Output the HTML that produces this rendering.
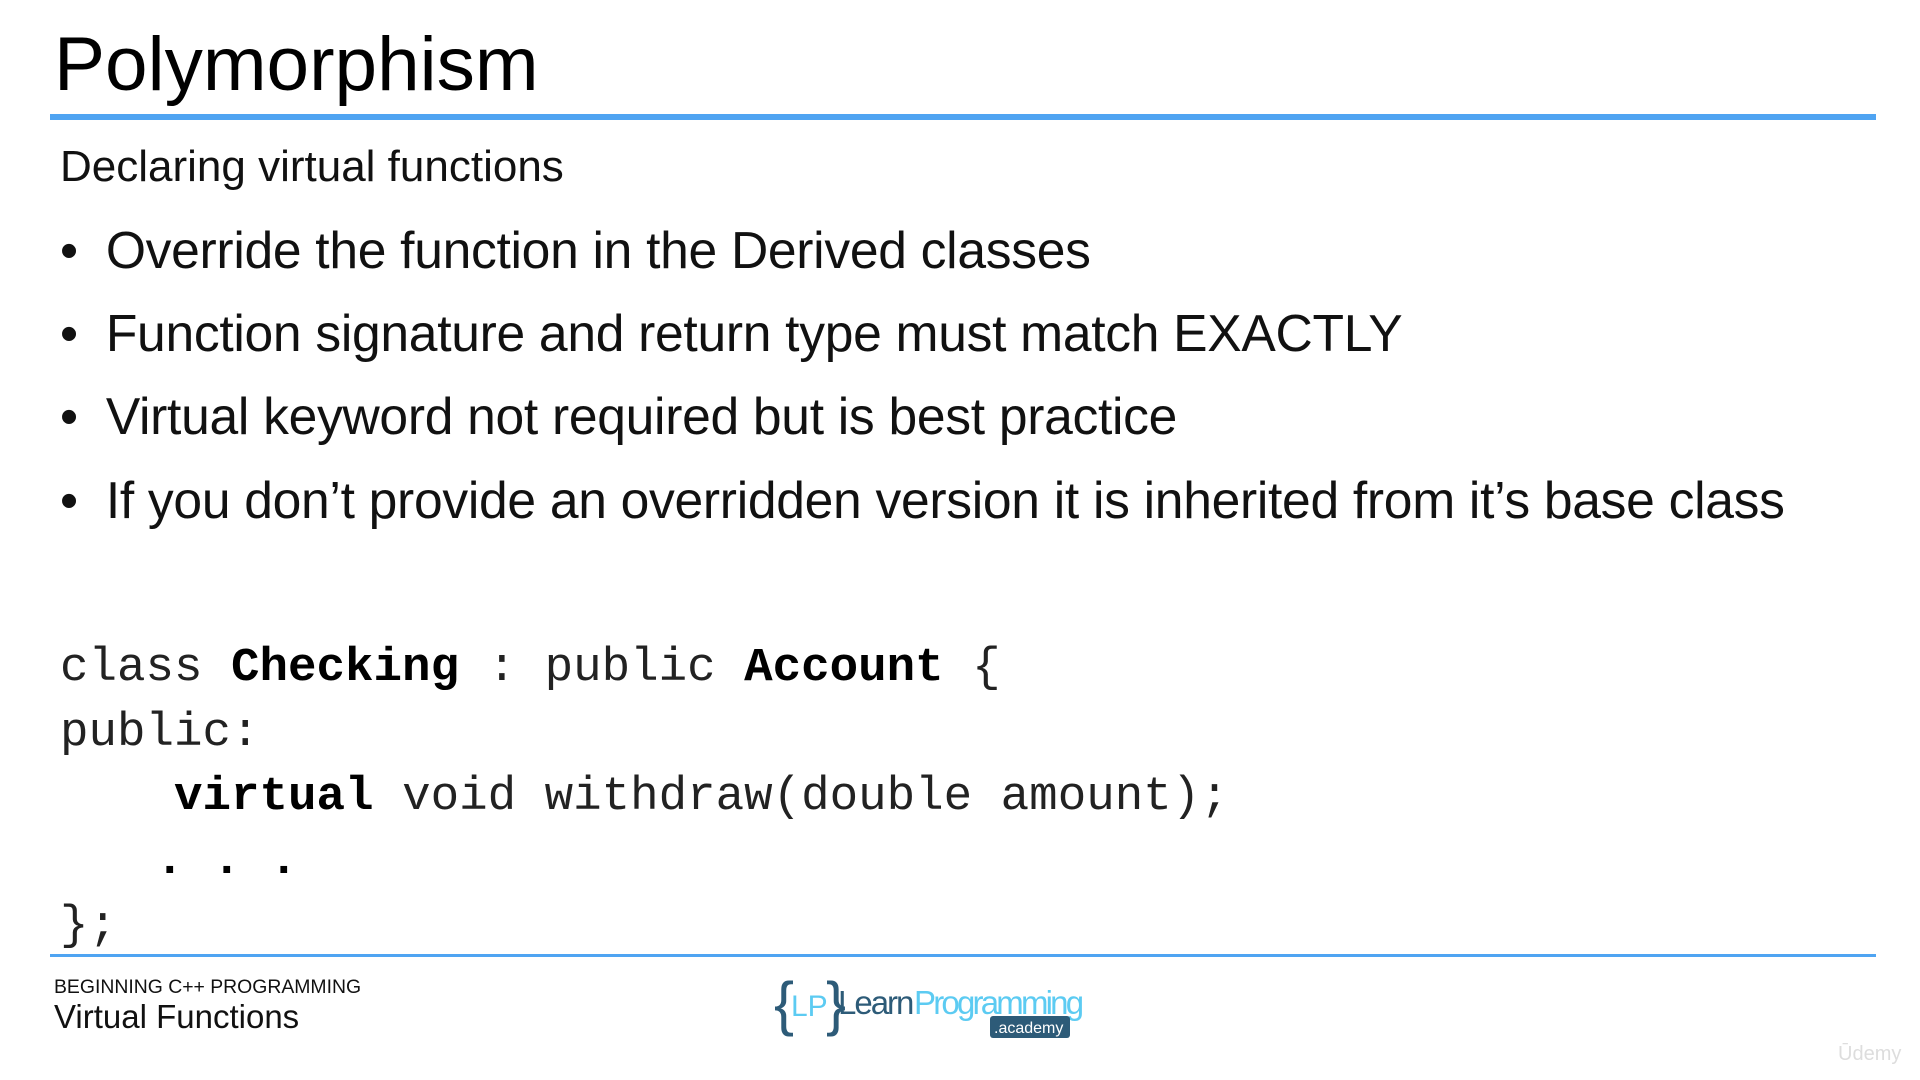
<!DOCTYPE html>
<html><head><meta charset="utf-8"><style>
*{margin:0;padding:0}
body{width:1920px;height:1080px;background:#fff;position:relative;overflow:hidden;font-family:"Liberation Sans",sans-serif;color:#111}
.a{position:absolute;white-space:pre}
.code{font-family:"Liberation Mono",monospace;font-size:47.5px;color:#222}
.b{font-weight:bold;color:#000}
.bl{font-size:51.6px;letter-spacing:-0.3px}
</style></head><body>
<div class="a" style="left:54px;top:20px;font-size:76.5px;line-height:90px;color:#000">Polymorphism</div>
<div class="a" style="left:50px;top:114px;width:1826px;height:6px;background:#4fa4f2"></div>
<div class="a" style="left:60px;top:141px;font-size:44px;line-height:52px">Declaring virtual functions</div>
<div class="a bl" style="left:60px;top:220px;line-height:60px">•  Override the function in the Derived classes</div>
<div class="a bl" style="left:60px;top:303px;line-height:60px">•  Function signature and return type must match EXACTLY</div>
<div class="a bl" style="left:60px;top:386px;line-height:60px">•  Virtual keyword not required but is best practice</div>
<div class="a bl" style="left:60px;top:470px;line-height:60px">•  If you don’t provide an overridden version it is inherited from it’s base class</div>
<div class="a code" style="left:60px;top:640px;line-height:56px">class <span class="b">Checking</span> : public <span class="b">Account</span> {</div>
<div class="a code" style="left:60px;top:705px;line-height:56px">public:</div>
<div class="a code" style="left:60px;top:769px;line-height:56px">    <span class="b">virtual</span> void withdraw(double amount);</div>
<div class="a code" style="left:70px;top:833px;line-height:56px"><span class="b">   . . .</span></div>
<div class="a code" style="left:60px;top:898px;line-height:56px">};</div>
<div class="a" style="left:50px;top:954px;width:1826px;height:3px;background:#4fa4f2"></div>
<div class="a" style="left:54px;top:976px;font-size:19.4px;line-height:22px">BEGINNING C++ PROGRAMMING</div>
<div class="a" style="left:54px;top:998px;font-size:33px;line-height:38px">Virtual Functions</div>
<svg class="a" style="left:772px;top:970px" width="330" height="72" viewBox="0 0 330 72">
<text x="2" y="54" font-family="Liberation Sans" font-size="60" fill="#2d5b78">{</text>
<text x="19" y="46" font-family="Liberation Sans" font-size="30" fill="#5ccbf2">LP</text>
<text x="54" y="54" font-family="Liberation Sans" font-size="60" fill="#2d5b78">}</text>
<text x="66" y="44" font-family="Liberation Sans" font-size="33" fill="#2d5b78" letter-spacing="-2">Learn</text>
<text x="142" y="44" font-family="Liberation Sans" font-size="33" fill="#5ccbf2" letter-spacing="-2.8">Programming</text>
<rect x="218" y="46" width="80" height="22" rx="3" fill="#2d5b78"/>
<text x="222" y="63" font-family="Liberation Sans" font-size="16" fill="#fff">.academy</text>
</svg>
<div class="a" style="left:1838px;top:1043px;font-size:20px;color:#ddd">Ūdemy</div>
</body></html>
